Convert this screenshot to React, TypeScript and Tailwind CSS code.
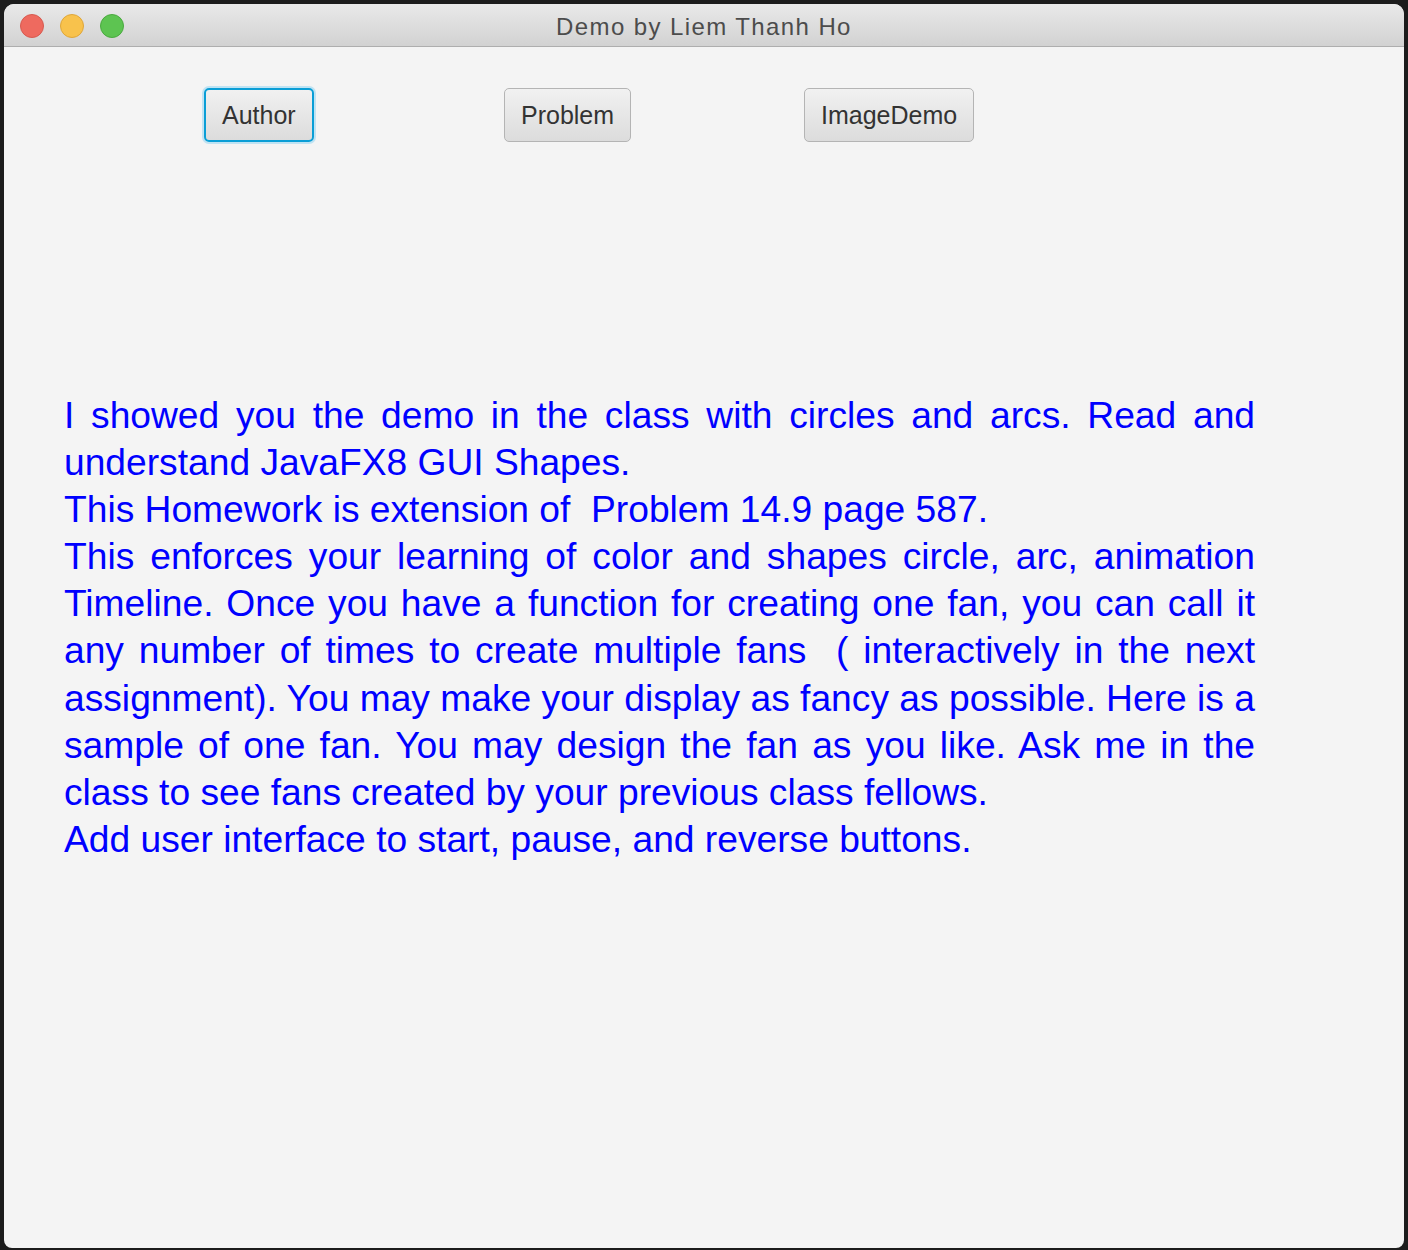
const lines: { text: string; justify: boolean }[] = [
  { text: 'I showed you the demo in the class with circles and arcs. Read and', justify: true },
  { text: 'understand JavaFX8 GUI Shapes.', justify: false },
  { text: 'This Homework is extension of  Problem 14.9 page 587.', justify: false },
  { text: 'This enforces your learning of color and shapes circle, arc, animation', justify: true },
  { text: 'Timeline. Once you have a function for creating one fan, you can call it', justify: true },
  { text: 'any number of times to create multiple fans  ( interactively in the next', justify: true },
  { text: 'assignment). You may make your display as fancy as possible. Here is a', justify: true },
  { text: 'sample of one fan. You may design the fan as you like. Ask me in the', justify: true },
  { text: 'class to see fans created by your previous class fellows.', justify: false },
  { text: 'Add user interface to start, pause, and reverse buttons.', justify: false },
];

function FxButton({ label, focused }: { label: string; focused?: boolean }) {
  return (
    <button
      className={`h-[54px] px-[16px] rounded-[5px] bg-gradient-to-b from-[#f1f1f1] to-[#dcdcdc] text-[#333333] text-[25px] leading-none ${
        focused
          ? 'border-2 border-[#0a9ed6] shadow-[0_0_0_2px_#bfe3f3]'
          : 'border border-[#b4b4b4]'
      }`}
    >
      {label}
    </button>
  );
}

export default function App() {
  return (
    <div className="w-[1408px] h-[1250px] bg-[#1c1c1c] pt-[4px] pl-[4px] pr-[4px] pb-[2px] font-['Liberation_Sans',Arial,sans-serif]">
      <div className="h-full bg-[#f4f4f4] rounded-t-[10px] rounded-b-[8px] overflow-hidden flex flex-col">
        <div className="relative h-[43px] bg-gradient-to-b from-[#e9e9e9] to-[#d2d2d2] border-b border-[#aeaeae] flex items-center justify-center shrink-0">
          <div className="absolute left-[16px] top-[10px] flex gap-[16px]">
            <span className="w-[24px] h-[24px] rounded-full bg-[#ee6a5f] border border-[#d65a50]" />
            <span className="w-[24px] h-[24px] rounded-full bg-[#f8c24c] border border-[#dea63a]" />
            <span className="w-[24px] h-[24px] rounded-full bg-[#5dc451] border border-[#4aa93f]" />
          </div>
          <span className="pt-[4px] text-[24px] tracking-[1.4px] text-[#4c4c4c]">Demo by Liem Thanh Ho</span>
        </div>

        <div className="flex pl-[200px] pt-[41px]">
          <div className="w-[300px]">
            <FxButton label="Author" focused />
          </div>
          <div className="w-[300px]">
            <FxButton label="Problem" />
          </div>
          <div className="w-[300px]">
            <FxButton label="ImageDemo" />
          </div>
        </div>

        <div className="mt-[250px] ml-[60px] w-[1191px] text-[#0000ff] text-[37.2px] leading-[47.1px]">
          {lines.map((l, i) => (
            <div
              key={i}
              className={l.justify ? 'whitespace-pre-wrap text-justify [text-align-last:justify]' : 'whitespace-pre'}
            >
              {l.text}
            </div>
          ))}
        </div>
      </div>
    </div>
  );
}
